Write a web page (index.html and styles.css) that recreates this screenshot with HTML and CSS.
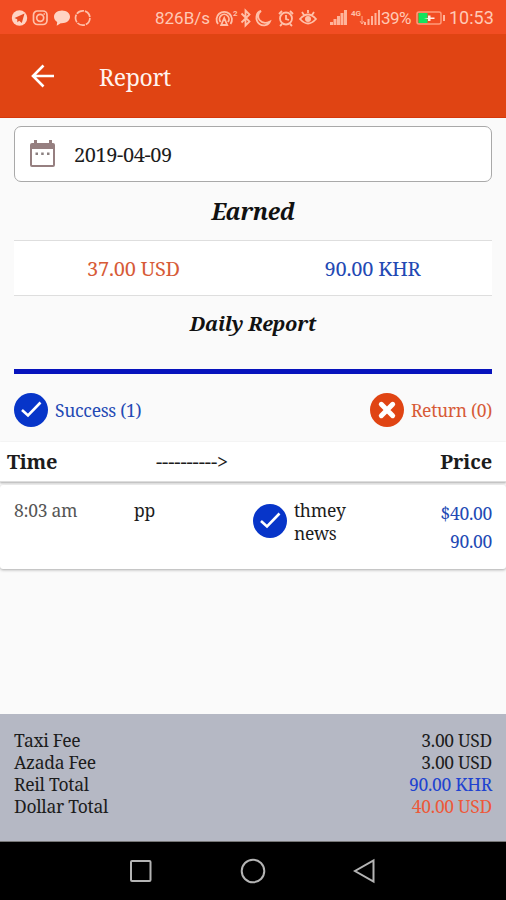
FILE: index.html
```html
<!DOCTYPE html>
<html lang="en">
<head>
<meta charset="utf-8">
<title>Report</title>
<link rel="stylesheet" href="styles.css">
</head>
<body>
<div class="phone">
  <div class="status">
    <svg class="status-left" width="84" height="20" viewBox="0 0 84 20">
      <g fill="#ffd3c3"><circle cx="9.500" cy="10" r="7.700"/>
      <path d="M52 2.500c-4.600 0-8 2.800-8 6.300 0 2.200 1.200 4 3.200 5.200l-.5 3.800 4-2.600c5.200.4 9.300-2.300 9.300-6.400 0-3.500-3.400-6.300-8-6.300z"/></g>
      <path d="M4.500 10l10-4.500-2.700 9.500-2.600-2.200-1.800 1.500-.2-3z" fill="#e84a20"/>
      <g fill="none" stroke="#ffc0a9" stroke-width="1.700"><rect x="23.500" y="3" width="13.500" height="13.500" rx="4"/><circle cx="30.200" cy="9.800" r="3.500"/><path d="M33.500 6h1.500"/><circle cx="72.700" cy="10" r="7.200" stroke-dasharray="8 1"/></g>
    </svg>
    <span class="speed">826B/s</span>
    <svg class="status-icons" width="104" height="22" viewBox="0 0 104 22">
      <g fill="none" stroke="#ffc0a9" stroke-width="1.800">
        <path d="M3 17a7.700 7.700 0 1 1 12.500 0M5.600 15a4.700 4.700 0 1 1 7.300 0M9.200 11l-3 7h6z"/>
        <path d="M26.500 6.500l8 8-4 4v-15l4 4-8 8"/>
        <path d="M46 4c-7 5.500 0 15 9 10.500-1.500 4-7 5-10.500 2.500-5-4-3.500-12 1.500-13z"/>
        <circle cx="71" cy="11.500" r="6"/><path d="M71 8v4l3 1M64 7l3-3M78 7l-3-3M67 17l-2 2M75 17l2 2"/>
        <path d="M85 12q8-9 16 0-8 9-16 0zM93 3v3M87 5l2 3M99 5l-2 3"/>
      </g>
      <circle cx="93" cy="12" r="3" fill="#ffc0a9"/>
      <text x="18" y="9" class="tiny">2</text>
    </svg>
    <svg class="signals" width="52" height="22" viewBox="0 0 52 22">
      <g fill="#ffb39a"><path d="M1 18v-3h3v3zM4.500 18v-6h3v6zM8 18V9h3v9zM11.500 18V6h3v12zM15 18V3h3v15z"/><path d="M35 18v-3h2v3zM38.500 18v-6h2v6zM42 18V9h2v9zM45.500 18V6h2v12zM49 18V3h2v15z"/></g>
      <text x="22" y="9" class="tiny">4G</text><path d="M33 9v8M31 14l2 3 2-3" stroke="#ffa98d" fill="none"/>
    </svg>
    <span class="percent">39%</span>
    <svg class="battery" width="30" height="16" viewBox="0 0 30 16"><rect x="1" y="2" width="24" height="12" rx="2" fill="none" stroke="#ff9b7b" stroke-width="1.500"/><path d="M2.500 3h9v10h-9z" fill="#12e45d"/><path d="M8 8h4V5.500h2.500V7.500h4v1.500h-4v2H12V9z" fill="#fff0e8"/><path d="M28 5v6" stroke="#ffb59c" stroke-width="2"/></svg>
    <span class="clock">10:53</span>
  </div>

  <header class="appbar">
    <svg width="24" height="24" viewBox="0 0 24 24" fill="none" stroke="#fff" stroke-width="2.600"><path d="M23 12H3M12.500 1.500L2 12l10.500 10.500"/></svg>
    <h1>Report</h1>
  </header>

  <main>
    <div class="date">
      <svg width="26" height="30" viewBox="0 0 26 30"><path d="M4 1h3v3h12V1h3v3h1q2 0 2 2v20q0 2-2 2H2q-2 0-2-2V6q0-2 2-2h2zM2 10v16h21V10z" fill="#967f80" fill-rule="evenodd"/><path d="M5.500 13.500h2.500v2.500h-2.500zM11.200 13.500h2.500v2.500h-2.500zM17 13.500h2.500v2.500h-2.500z" fill="#8b8080"/></svg>
      <span>2019-04-09</span>
    </div>
    <h2 class="earned">Earned</h2>
    <div class="totals"><span class="orange">37.00 USD</span><span class="blue">90.00 KHR</span></div>
    <h2 class="daily">Daily Report</h2>
    <div class="rule"></div>
    <div class="legend">
      <div class="blue"><svg width="34" height="34" viewBox="0 0 34 34"><circle cx="17" cy="17" r="17" fill="#0735c9"/><path d="M8 17l6 5.500L26.500 9.500" fill="none" stroke="#fff" stroke-width="2.600"/></svg><span>Success (1)</span></div>
      <div class="orange"><svg width="34" height="34" viewBox="0 0 34 34"><circle cx="17" cy="17" r="17" fill="#e04413"/><path d="M11.300 11.300l11.400 11.400M22.700 11.300L11.300 22.700" stroke="#fff" stroke-width="5" stroke-linecap="round"/></svg><span>Return (0)</span></div>
    </div>
  </main>

  <div class="table-head"><b class="th-time">Time</b><span class="arrow">----------&gt;</span><b class="th-price">Price</b></div>
  <div class="entry">
    <span class="time">8:03 am</span><span class="from">pp</span>
    <svg width="34" height="34" viewBox="0 0 34 34"><circle cx="17" cy="17" r="17" fill="#0735c9"/><path d="M8 17l6 5.500L26.500 9.500" fill="none" stroke="#fff" stroke-width="2.600"/></svg>
    <span class="to">thmey<br>news</span>
    <span class="price">$40.00<br>90.00</span>
  </div>

  <footer class="summary">
    <div><span>Taxi Fee</span><span>3.00 USD</span></div>
    <div><span>Azada Fee</span><span>3.00 USD</span></div>
    <div><span>Reil Total</span><span class="khr">90.00 KHR</span></div>
    <div><span>Dollar Total</span><span class="usd">40.00 USD</span></div>
  </footer>
  <nav class="nav">
    <svg width="24" height="26" viewBox="0 0 24 26"><rect x="2" y="3" width="19.500" height="20" rx="1"/></svg>
    <svg width="26" height="26" viewBox="0 0 26 26"><circle cx="13" cy="13" r="11.300"/></svg>
    <svg width="24" height="26" viewBox="0 0 24 26"><path d="M20.500 2.500v21L2 13z"/></svg>
  </nav>
</div>
</body>
</html>
```

FILE: styles.css
```css
* { box-sizing: border-box; }
body { margin: 0; }
h1, h2 { margin: 0; font-weight: 400; }
svg { display: block; flex: none; }
.phone { width: 506px; height: 900px; display: flex; flex-direction: column; background: #fafafa; color: #1c1c1c; font-family: "Noto Serif", "DejaVu Serif Condensed", "DejaVu Serif", serif; font-size: 17.5px; letter-spacing: -.3px; overflow: hidden; white-space: nowrap; }
.status { height: 34px; flex: none; display: flex; align-items: center; padding: 1px 0 0 10px; background: #f24d23; color: #ffc9b5; font-family: Roboto, sans-serif; font-size: 17px; letter-spacing: 0; }
.speed { width: 56px; margin-left: 61px; }
.status-icons { margin-left: 4px; }
.signals { margin-left: 10px; }
.percent { width: 32px; font-size: 17px; letter-spacing: -.5px; }
.battery { margin-left: 3px; }
.clock { margin-left: 3px; font-size: 18px; }
.tiny { font: 700 8px Roboto, sans-serif; fill: #ffc0a9; }
.appbar { height: 84px; flex: none; display: flex; align-items: center; padding: 0 0 0 31px; background: #e04413; border-bottom: 1px solid #d5380c; color: #fff4ef; }
.appbar h1 { margin: 2px 0 0 44px; font-size: 23px; letter-spacing: -.3px; }
main { height: 324px; flex: none; padding: 8px 14px 0 14px; }
.date { height: 56px; display: flex; align-items: center; padding: 0 15px; border: 1px solid #a9a9a9; border-radius: 7px; background: #fff; font-size: 20px; letter-spacing: -.4px; }
.date span { margin-left: 18px; }
.earned, .daily { text-align: center; color: #111; font-style: italic; font-weight: 700; }
.earned { height: 58px; font-size: 23px; line-height: 59px; letter-spacing: -.4px; }
.totals { height: 56px; display: grid; grid-template-columns: 1fr 1fr; align-items: center; text-align: center; border: solid #dedede; border-width: 1px 0; background: #fff; font-size: 20px; letter-spacing: -.2px; }
.daily { height: 73px; font-size: 20px; line-height: 56px; letter-spacing: -.2px; }
.rule { height: 5px; background: #0713bd; }
.legend { display: flex; justify-content: space-between; margin-top: 19px; }
.legend div { display: flex; align-items: center; gap: 7px; }
.blue { color: #2349b4; }
.orange { color: #d75b37; }
.table-head { height: 40px; flex: none; display: flex; align-items: center; padding: 0 14px 0 7px; background: #fff; font-size: 20px; border-bottom: 1px solid #ddd; box-shadow: 0 1px 2px #aaa; }
.th-time { width: 149px; }
.arrow { flex: 1; letter-spacing: -.1px; }
.th-price { letter-spacing: -.1px; }
.entry { height: 84px; flex: none; margin-top: 3px; display: flex; align-items: flex-start; padding: 14px 14px 0 14px; background: #fff; border-radius: 3px; box-shadow: 0 1px 3px #aaa; line-height: 23px; }
.time { width: 120px; color: #555; }
.from { width: 120px; }
.entry svg { margin-top: 5px; margin-left: -1px; }
.to { flex: 1; margin-left: 7px; }
.price { line-height: 28px; text-align: right; color: #2349b4; }
.summary { height: 128px; flex: none; margin-top: auto; padding: 15px 14px 0 14px; background: #b5b8c4; border-bottom: 1px solid #777; }
.summary div { display: flex; justify-content: space-between; height: 22px; line-height: 22px; }
.khr { color: #2042d0; }
.usd { color: #ed5939; }
.nav { height: 58px; flex: none; display: flex; align-items: center; gap: 87px; padding: 0 0 0 129px; background: #000; }
.nav svg { fill: none; stroke: #b4b4b4; stroke-width: 2; }
```
